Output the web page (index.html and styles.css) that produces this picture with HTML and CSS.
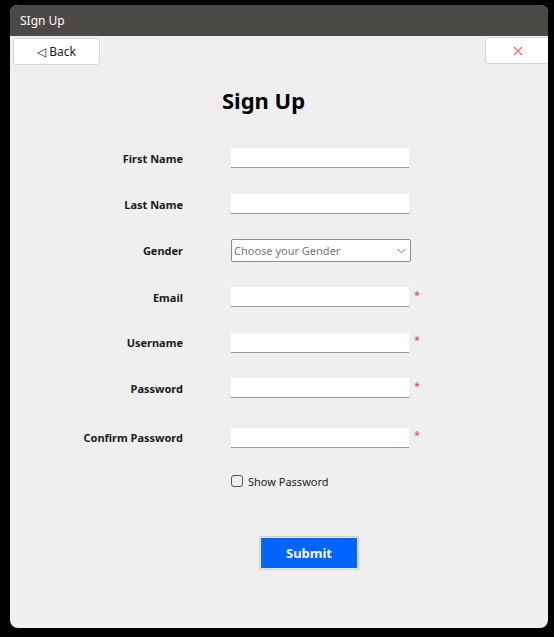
FILE: index.html
```html
<!DOCTYPE html>
<html>
<head>
<meta charset="utf-8">
<link rel="stylesheet" href="styles.css">
</head>
<body>
<div class="window">
  <div class="titlebar">SIgn Up</div>
  <div class="content">
    <div class="topbar">
      <button class="btn back">&#9665; Back</button>
      <button class="btn close">
        <svg width="10" height="10" viewBox="0 0 10 10"><path d="M1 1L9 9M9 1L1 9" stroke="#f06a6a" stroke-width="1.2" fill="none"/></svg>
      </button>
    </div>
    <h1 class="heading">Sign Up</h1>
    <div class="form">
      <div class="row"><label class="lbl">First Name</label><div class="field"></div></div>
      <div class="row"><label class="lbl">Last Name</label><div class="field"></div></div>
      <div class="row r-gender"><label class="lbl">Gender</label>
        <div class="select"><span>Choose your Gender</span>
          <svg width="9" height="6" viewBox="0 0 9 6"><path d="M0.5 0.8L4.5 4.8L8.5 0.8" stroke="#777" stroke-width="1" fill="none"/></svg>
        </div></div>
      <div class="row"><label class="lbl">Email</label><div class="field"></div><span class="req">*</span></div>
      <div class="row r-user"><label class="lbl">Username</label><div class="field"></div><span class="req">*</span></div>
      <div class="row"><label class="lbl">Password</label><div class="field"></div><span class="req">*</span></div>
      <div class="row r-confirm"><label class="lbl">Confirm Password</label><div class="field"></div><span class="req">*</span></div>
      <div class="row r-check"><span class="lbl"></span><span class="box"></span><span class="chk-text">Show Password</span></div>
    </div>
    <div class="submit-wrap"><button class="submit">Submit</button></div>
  </div>
</div>
</body>
</html>
```
FILE: styles.css
```css
html, body { margin: 0; padding: 0; }
body {
  background: #000;
  width: 554px;
  height: 637px;
  overflow: hidden;
  font-family: "Noto Sans", "Open Sans", sans-serif;
}
.window {
  margin: 5px 0 0 10px;
  width: 538px;
  height: 623px;
  border-radius: 8px;
  overflow: hidden;
  background: #efefef;
  display: flex;
  flex-direction: column;
}
.titlebar {
  height: 31px;
  background: #4a4946;
  color: #fff;
  font-size: 12px;
  line-height: 31px;
  padding-left: 10px;
  flex: none;
}
.content { flex: 1; display: flex; flex-direction: column; }
.topbar {
  display: flex;
  justify-content: space-between;
  align-items: flex-start;
  padding: 1px 0 0 3px;
  height: 27px;
}
.btn {
  background: #fff;
  border: 1px solid #d6d6d6;
  border-radius: 3px;
  font-family: inherit;
  padding: 0;
  cursor: pointer;
}
.back {
  margin-top: 1px;
  width: 87px;
  height: 27px;
  font-size: 12px;
  color: #222;
}
.close {
  width: 66px;
  height: 27px;
  margin-right: -3px;
  display: flex;
  align-items: center;
  padding-left: 27px;
}
.heading {
  margin: 20px 0 0 212px;
  text-align: left;
  font-size: 22px;
  font-weight: 700;
  color: #000;
  height: 32px;
  line-height: 32px;
}
.form { margin-top: 19px; display: flex; flex-direction: column; }
.row {
  display: flex;
  align-items: center;
  height: 46px;
}
.r-gender { height: 47px; }
.r-user { height: 45px; }
.r-confirm { height: 49px; margin-top: 2px; }
.r-check { height: 44px; margin-top: -3px; }
.lbl {
  width: 173px;
  text-align: right;
  font-size: 11px;
  font-weight: 700;
  color: #1a1a1a;
  margin-right: 48px;
  flex: none;
}
.field {
  width: 178px;
  height: 20px;
  background: #fff;
  border-bottom: 1px solid #9a9a9a;
  box-sizing: border-box;
}
.select {
  width: 180px;
  height: 23px;
  box-sizing: border-box;
  background: #fff;
  border: 1px solid #8c8c8c;
  border-radius: 2px;
  display: flex;
  align-items: center;
  justify-content: space-between;
  padding: 0 4px 0 2px;
  font-size: 11px;
  color: #777;
}
.req {
  color: #e0474c;
  font-size: 11px;
  margin-left: 5px;
  margin-top: -6px;
}
.box {
  width: 12px;
  height: 12px;
  box-sizing: border-box;
  border: 1px solid #555;
  border-radius: 3px;
  margin-left: 0;
}
.chk-text {
  font-size: 11px;
  color: #222;
  margin-left: 5px;
}
.submit-wrap {
  display: flex;
  margin-top: 34px;
  padding-left: 250px;
}
.submit {
  width: 98px;
  height: 32px;
  background: #0066ff;
  border: 1px solid #e8e8e8;
  box-shadow: 0 0 0 1px #d0d0d0;
  color: #fff;
  font-family: inherit;
  font-size: 13px;
  font-weight: 700;
  border-radius: 1px;
}
```
